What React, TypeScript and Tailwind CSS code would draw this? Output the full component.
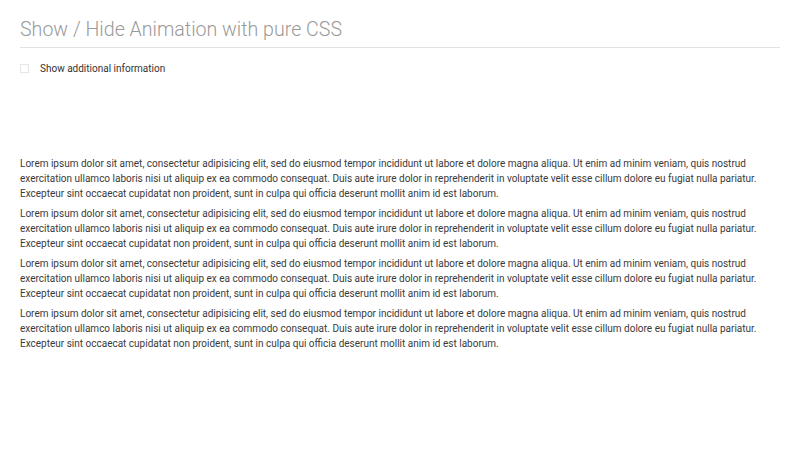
import React from "react";

const LOREM =
  "Lorem ipsum dolor sit amet, consectetur adipisicing elit, sed do eiusmod tempor incididunt ut labore et dolore magna aliqua. Ut enim ad minim veniam, quis nostrud exercitation ullamco laboris nisi ut aliquip ex ea commodo consequat. Duis aute irure dolor in reprehenderit in voluptate velit esse cillum dolore eu fugiat nulla pariatur. Excepteur sint occaecat cupidatat non proident, sunt in culpa qui officia deserunt mollit anim id est laborum.";

export default function App() {
  return (
    <div className="w-[800px] h-[450px] bg-white px-5 pt-[14px]" style={{ fontFamily: "Roboto, sans-serif" }}>
      <h1 className="text-[19.6px] leading-[32px] font-light text-[#9a9a9a] pb-[1px] border-b border-[#e2e2e2]">
        Show / Hide Animation with pure CSS
      </h1>
      <label className="flex items-center gap-[11px] mt-[13px] text-[10px] text-[#333]">
        <span className="w-[9px] h-[9px] border border-[#e6e6e6] bg-white" />
        <span>Show additional information</span>
      </label>
      <div className="mt-[80px] text-[10px] leading-[15px] text-[#3a3a3a]">
        {[0, 1, 2, 3].map((i) => (
          <p key={i} className="mb-[5px]">
            {LOREM}
          </p>
        ))}
      </div>
    </div>
  );
}
